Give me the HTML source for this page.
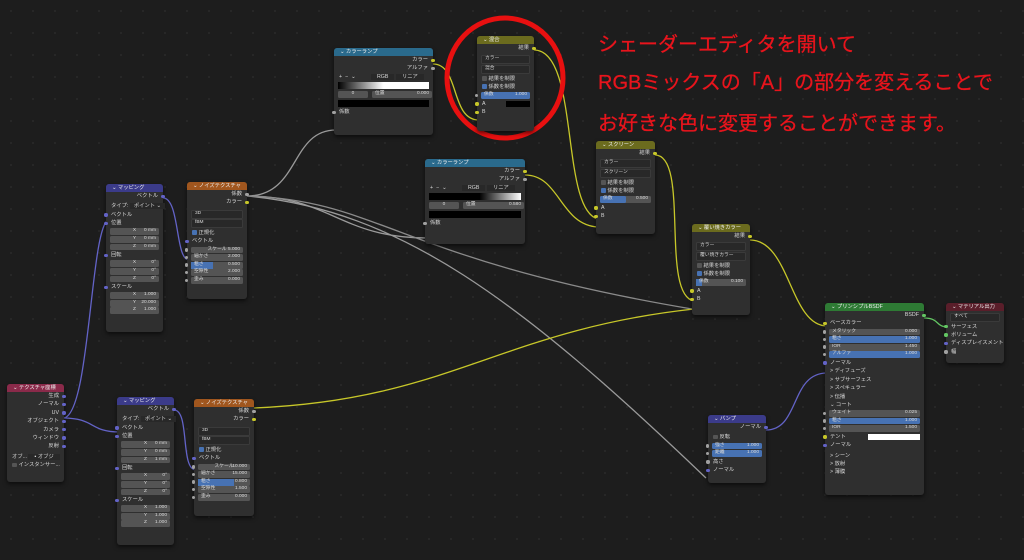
<!DOCTYPE html>
<html><head><meta charset="utf-8"><style>
body{margin:0;width:1024px;height:560px;overflow:hidden;background:#1d1d1d;font-family:"Liberation Sans","Noto Sans CJK JP",sans-serif;position:relative}
.bg{position:absolute;inset:0;background-image:radial-gradient(#2a2a2a 0.8px,transparent 1px);background-size:22px 22px}
.n{position:absolute;background:#2f2f2f;border-radius:3px;box-shadow:0 2px 4px rgba(0,0,0,.6);color:#d8d8d8;font-size:5.3px;line-height:8.4px}
.h{height:8px;line-height:8px;border-radius:3px 3px 0 0;padding-left:6px;color:#eee;font-size:5.3px}
.r{position:relative;height:8.4px;padding:0 5px;white-space:nowrap}
.o{text-align:right}
.f{margin:0.8px 4px;height:6.8px;line-height:6.8px;background:#545454;border-radius:1.5px;padding:0 3px;position:relative;font-size:4.8px}
.f span{position:absolute;right:3px}
.b{background:#4772b3}
.d{margin:0.8px 4px;height:6.8px;line-height:6.8px;background:#282828;border:0.5px solid #3a3a3a;border-radius:1.5px;padding:0 3px;font-size:4.8px}
.s{position:absolute;width:3.4px;height:3.4px;border-radius:50%;top:2.5px;background:#a1a1a1}
.L{left:-1.7px}.R{right:-1.7px}
.y{background:#c7c729}.p{background:#6363c7}.g{background:#63c763}
.cb{display:inline-block;width:4.5px;height:4.5px;background:#555;border-radius:1px;vertical-align:-1px;margin-right:2px}
.cb.on{background:#4772b3}
.txt{position:absolute;left:598px;color:#e8141c;font-size:20px;font-family:"Liberation Sans","Noto Sans CJK JP",sans-serif;white-space:nowrap;-webkit-text-stroke:0.3px #e8141c}
</style></head><body>
<div class="bg"></div>
<svg width="1024" height="560" style="position:absolute;left:0;top:0" fill="none" stroke-width="1.3">
<g stroke="#9a9a9a">
<path d="M247 196 C300 196 290 130 336 130"/>
<path d="M247 196 C330 196 340 238 427 238"/>
<path d="M247 196 C400 210 520 300 706 478"/>
<path d="M247 196 C380 200 400 260 692 309" stroke="#8a8a8a"/>
</g>
<g stroke="#c7c729">
<path d="M433 64 C460 64 450 120 479 120"/>
<path d="M534 50 C580 50 560 210 598 219"/>
<path d="M525 175 C560 175 560 225 598 227"/>
<path d="M655 155 C690 155 660 295 694 301"/>
<path d="M750 240 C790 240 790 326 827 326"/>
<path d="M254 408 C450 400 500 330 694 309"/>
</g>
<g stroke="#6363c7">
<path d="M163 198 C180 198 175 260 189 260"/>
<path d="M63 418 C90 418 90 230 108 220"/>
<path d="M63 418 C95 418 90 432 119 432"/>
<path d="M174 410 C190 410 180 470 196 470"/>
<path d="M766 430 C800 430 790 373 827 373"/>
</g>
<path d="M924 318 C940 318 935 327 948 327" stroke="#63c763"/>
<ellipse cx="505" cy="78" rx="58" ry="60" stroke="#e81010" stroke-width="5"/>
</svg>

<div class="txt" style="top:28px">シェーダーエディタを開いて</div>
<div class="txt" style="top:66px">RGBミックスの「A」の部分を変えることで</div>
<div class="txt" style="top:107px">お好きな色に変更することができます。</div>

<!-- ColorRamp 1 -->
<div class="n" style="left:334px;top:48px;width:99px;height:87px">
<div class="h" style="background:#2a6a8c">⌄ カラーランプ</div>
<div class="r o">カラー<i class="s R y"></i></div>
<div class="r o">アルファ<i class="s R"></i></div>
<div class="r">+ &nbsp;− &nbsp;⌄ <span style="margin-left:14px;background:#282828;padding:0 6px">RGB</span> <span style="background:#282828;padding:0 6px">リニア</span></div>
<div style="margin:1px 4px;height:7px;background:linear-gradient(90deg,#000,#fff 50%,#fff)"></div>
<div class="r" style="height:9px"><span class="f" style="position:absolute;left:0;width:24px;margin:1px 4px;text-align:center">0</span><span class="f" style="position:absolute;left:34px;width:54px;margin:1px 4px">位置<span>0.000</span></span></div>
<div style="margin:1px 4px;height:7px;background:#000"></div>
<div class="r">係数<i class="s L"></i></div>
</div>

<!-- Mix -->
<div class="n" style="left:477px;top:36px;width:57px;height:95px">
<div class="h" style="background:#6b6b1e">⌄ 混合</div>
<div class="r o">結果<i class="s R y"></i></div>
<div class="d" style="margin-top:3px">カラー</div>
<div class="d">混合</div>
<div class="r"><span class="cb"></span>結果を制限</div>
<div class="r"><span class="cb on"></span>係数を制限</div>
<div class="f b">係数<span>1.000</span><i class="s L" style="left:-6px;top:1.7px"></i></div>
<div class="r">A<i class="s L y"></i><span style="position:absolute;right:4px;top:1px;width:24px;height:6.5px;background:#000"></span></div>
<div class="r">B<i class="s L y"></i></div>
</div>

<!-- ColorRamp 2 -->
<div class="n" style="left:425px;top:159px;width:100px;height:85px">
<div class="h" style="background:#2a6a8c">⌄ カラーランプ</div>
<div class="r o">カラー<i class="s R y"></i></div>
<div class="r o">アルファ<i class="s R"></i></div>
<div class="r">+ &nbsp;− &nbsp;⌄ <span style="margin-left:14px;background:#282828;padding:0 6px">RGB</span> <span style="background:#282828;padding:0 6px">リニア</span></div>
<div style="margin:1px 4px;height:7px;background:linear-gradient(90deg,#000,#000 55%,#fff)"></div>
<div class="r" style="height:9px"><span class="f" style="position:absolute;left:0;width:24px;margin:1px 4px;text-align:center">0</span><span class="f" style="position:absolute;left:34px;width:55px;margin:1px 4px">位置<span>0.580</span></span></div>
<div style="margin:1px 4px;height:7px;background:#000"></div>
<div class="r">係数<i class="s L"></i></div>
</div>

<!-- Screen -->
<div class="n" style="left:596px;top:141px;width:59px;height:93px">
<div class="h" style="background:#6b6b1e">⌄ スクリーン</div>
<div class="r o">結果<i class="s R y"></i></div>
<div class="d" style="margin-top:2px">カラー</div>
<div class="d">スクリーン</div>
<div class="r"><span class="cb"></span>結果を制限</div>
<div class="r"><span class="cb on"></span>係数を制限</div>
<div class="f"><span style="position:absolute;left:0;width:26px;height:100%;background:#4772b3;border-radius:1.5px"></span><b style="position:relative;font-weight:normal">係数</b><span>0.500</span></div>
<div class="r">A<i class="s L y"></i></div>
<div class="r">B<i class="s L y"></i></div>
</div>

<!-- Overlay -->
<div class="n" style="left:692px;top:224px;width:58px;height:91px">
<div class="h" style="background:#6b6b1e">⌄ 覆い焼きカラー</div>
<div class="r o">結果<i class="s R y"></i></div>
<div class="d" style="margin-top:2px">カラー</div>
<div class="d">覆い焼きカラー</div>
<div class="r"><span class="cb"></span>結果を制限</div>
<div class="r"><span class="cb on"></span>係数を制限</div>
<div class="f"><span style="position:absolute;left:0;width:6px;height:100%;background:#4772b3"></span><b style="position:relative;font-weight:normal">係数</b><span>0.100</span></div>
<div class="r">A<i class="s L y"></i></div>
<div class="r">B<i class="s L y"></i></div>
</div>

<!-- Mapping 1 -->
<div class="n" style="left:106px;top:184px;width:57px;height:148px">
<div class="h" style="background:#3b3b8a">⌄ マッピング</div>
<div class="r o">ベクトル<i class="s R p"></i></div>
<div class="r" style="margin-top:2px">タイプ: <span style="background:#282828;padding:0 4px">ポイント ⌄</span></div>
<div class="r">ベクトル<i class="s L p"></i></div>
<div class="r">位置<i class="s L p"></i></div>
<div class="f" style="text-align:center">X<span>0 mm</span></div>
<div class="f" style="text-align:center">Y<span>0 mm</span></div>
<div class="f" style="text-align:center">Z<span>0 mm</span></div>
<div class="r">回転<i class="s L p"></i></div>
<div class="f" style="text-align:center">X<span>0°</span></div>
<div class="f" style="text-align:center">Y<span>0°</span></div>
<div class="f" style="text-align:center">Z<span>0°</span></div>
<div class="r">スケール<i class="s L p"></i></div>
<div class="f" style="text-align:center">X<span>1.000</span></div>
<div class="f" style="text-align:center">Y<span>20.000</span></div>
<div class="f" style="text-align:center">Z<span>1.000</span></div>
</div>

<!-- Noise 1 -->
<div class="n" style="left:187px;top:182px;width:60px;height:117px">
<div class="h" style="background:#a0561e">⌄ ノイズテクスチャ</div>
<div class="r o">係数<i class="s R"></i></div>
<div class="r o">カラー<i class="s R y"></i></div>
<div class="d" style="margin-top:3px">3D</div>
<div class="d">fBM</div>
<div class="r"><span class="cb on"></span>正規化</div>
<div class="r">ベクトル<i class="s L p"></i></div>
<div class="f" style="text-align:center">スケール<span>5.000</span><i class="s L" style="left:-6px;top:1.7px"></i></div>
<div class="f">細かさ<span>2.000</span><i class="s L" style="left:-6px;top:1.7px"></i></div>
<div class="f"><span style="position:absolute;left:0;width:22px;height:100%;background:#4772b3"></span><b style="position:relative;font-weight:normal">粗さ</b><span>0.500</span><i class="s L" style="left:-6px;top:1.7px"></i></div>
<div class="f">空隙性<span>2.000</span><i class="s L" style="left:-6px;top:1.7px"></i></div>
<div class="f">歪み<span>0.000</span><i class="s L" style="left:-6px;top:1.7px"></i></div>
</div>

<!-- Tex coord -->
<div class="n" style="left:7px;top:384px;width:57px;height:98px">
<div class="h" style="background:#8a2a4a">⌄ テクスチャ座標</div>
<div class="r o">生成<i class="s R p"></i></div>
<div class="r o">ノーマル<i class="s R p"></i></div>
<div class="r o">UV<i class="s R p"></i></div>
<div class="r o">オブジェクト<i class="s R p"></i></div>
<div class="r o">カメラ<i class="s R p"></i></div>
<div class="r o">ウィンドウ<i class="s R p"></i></div>
<div class="r o">反射<i class="s R p"></i></div>
<div class="r" style="margin-top:2px">オブ... <span style="background:#282828;padding:0 6px">▪ オブジ</span></div>
<div class="r"><span class="cb"></span>インスタンサー...</div>
</div>

<!-- Mapping 2 -->
<div class="n" style="left:117px;top:397px;width:57px;height:148px">
<div class="h" style="background:#3b3b8a">⌄ マッピング</div>
<div class="r o">ベクトル<i class="s R p"></i></div>
<div class="r" style="margin-top:2px">タイプ: <span style="background:#282828;padding:0 4px">ポイント ⌄</span></div>
<div class="r">ベクトル<i class="s L p"></i></div>
<div class="r">位置<i class="s L p"></i></div>
<div class="f" style="text-align:center">X<span>0 mm</span></div>
<div class="f" style="text-align:center">Y<span>0 mm</span></div>
<div class="f" style="text-align:center">Z<span>1 mm</span></div>
<div class="r">回転<i class="s L p"></i></div>
<div class="f" style="text-align:center">X<span>0°</span></div>
<div class="f" style="text-align:center">Y<span>0°</span></div>
<div class="f" style="text-align:center">Z<span>0°</span></div>
<div class="r">スケール<i class="s L p"></i></div>
<div class="f" style="text-align:center">X<span>1.000</span></div>
<div class="f" style="text-align:center">Y<span>1.000</span></div>
<div class="f" style="text-align:center">Z<span>1.000</span></div>
</div>

<!-- Noise 2 -->
<div class="n" style="left:194px;top:399px;width:60px;height:117px">
<div class="h" style="background:#a0561e">⌄ ノイズテクスチャ</div>
<div class="r o">係数<i class="s R"></i></div>
<div class="r o">カラー<i class="s R y"></i></div>
<div class="d" style="margin-top:3px">3D</div>
<div class="d">fBM</div>
<div class="r"><span class="cb on"></span>正規化</div>
<div class="r">ベクトル<i class="s L p"></i></div>
<div class="f" style="text-align:center">スケール<span>10.000</span><i class="s L" style="left:-6px;top:1.7px"></i></div>
<div class="f">細かさ<span>15.000</span><i class="s L" style="left:-6px;top:1.7px"></i></div>
<div class="f"><span style="position:absolute;left:0;width:36px;height:100%;background:#4772b3"></span><b style="position:relative;font-weight:normal">粗さ</b><span>0.800</span><i class="s L" style="left:-6px;top:1.7px"></i></div>
<div class="f">空隙性<span>1.500</span><i class="s L" style="left:-6px;top:1.7px"></i></div>
<div class="f">歪み<span>0.000</span><i class="s L" style="left:-6px;top:1.7px"></i></div>
</div>

<!-- Bump -->
<div class="n" style="left:708px;top:415px;width:58px;height:68px">
<div class="h" style="background:#3b3b8a">⌄ バンプ</div>
<div class="r o">ノーマル<i class="s R p"></i></div>
<div class="r" style="margin-top:2px"><span class="cb"></span>反転</div>
<div class="f b">強さ<span>1.000</span><i class="s L" style="left:-6px;top:1.7px"></i></div>
<div class="f b">距離<span>1.000</span><i class="s L" style="left:-6px;top:1.7px"></i></div>
<div class="r">高さ<i class="s L"></i></div>
<div class="r">ノーマル<i class="s L p"></i></div>
</div>

<!-- Principled -->
<div class="n" style="left:825px;top:303px;width:99px;height:192px">
<div class="h" style="background:#2e7a34">⌄ プリンシプルBSDF</div>
<div class="r o">BSDF<i class="s R g"></i></div>
<div class="r">ベースカラー<i class="s L y"></i></div>
<div class="f">メタリック<span>0.000</span><i class="s L" style="left:-6px;top:1.7px"></i></div>
<div class="f b">粗さ<span>1.000</span><i class="s L" style="left:-6px;top:1.7px"></i></div>
<div class="f">IOR<span>1.450</span><i class="s L" style="left:-6px;top:1.7px"></i></div>
<div class="f b">アルファ<span>1.000</span><i class="s L" style="left:-6px;top:1.7px"></i></div>
<div class="r">ノーマル<i class="s L p"></i></div>
<div class="r">&gt; ディフューズ</div>
<div class="r">&gt; サブサーフェス</div>
<div class="r">&gt; スペキュラー</div>
<div class="r">&gt; 伝播</div>
<div class="r">⌄ コート</div>
<div class="f">ウェイト<span>0.025</span><i class="s L" style="left:-6px;top:1.7px"></i></div>
<div class="f b">粗さ<span>1.000</span><i class="s L" style="left:-6px;top:1.7px"></i></div>
<div class="f">IOR<span>1.500</span><i class="s L" style="left:-6px;top:1.7px"></i></div>
<div class="r">テント<i class="s L y"></i><span style="position:absolute;right:4px;top:1px;width:52px;height:6.5px;background:#fff"></span></div>
<div class="r">ノーマル<i class="s L p"></i></div>
<div class="r" style="margin-top:2px">&gt; シーン</div>
<div class="r">&gt; 放射</div>
<div class="r">&gt; 薄膜</div>
</div>

<!-- Material output -->
<div class="n" style="left:946px;top:303px;width:58px;height:60px">
<div class="h" style="background:#5a1e2a">⌄ マテリアル出力</div>
<div class="d" style="margin-top:2px">すべて</div>
<div class="r">サーフェス<i class="s L g"></i></div>
<div class="r">ボリューム<i class="s L g"></i></div>
<div class="r">ディスプレイスメント<i class="s L p"></i></div>
<div class="r">幅<i class="s L"></i></div>
</div>
</body></html>
